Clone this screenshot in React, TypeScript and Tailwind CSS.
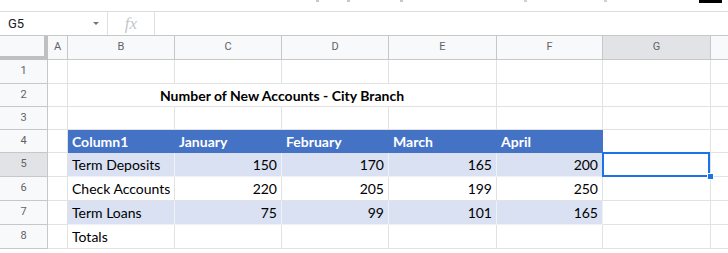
// ── IMPORTS ───────────────────────────────────────────────────────────────────
import React from "react";

// ── CONSTANTS ─────────────────────────────────────────────────────────────────
const COLS = [
  { key: "A", w: "w-[20px]" },
  { key: "B", w: "w-[107px]" },
  { key: "C", w: "w-[107px]" },
  { key: "D", w: "w-[107px]" },
  { key: "E", w: "w-[108px]" },
  { key: "F", w: "w-[106px]" },
  { key: "G", w: "w-[108px]" },
];

const ROW_H = ["h-[24px]", "h-[23px]", "h-[23px]", "h-[23px]", "h-[24px]", "h-[24px]", "h-[24px]", "h-[24px]"];

const DATA = [
  { label: "Term Deposits", vals: [150, 170, 165, 200], shade: true },
  { label: "Check Accounts", vals: [220, 205, 199, 250], shade: false },
  { label: "Term Loans", vals: [75, 99, 101, 165], shade: true },
];

const HEAD = ["Column1", "January", "February", "March", "April"];

const cellFont = { fontFamily: "Lato, 'Open Sans', sans-serif" };

// ── PIECES ────────────────────────────────────────────────────────────────────
function RowHead({ n, h, active }: { n: number; h: string; active?: boolean }) {
  return (
    <div
      className={`${h} w-[48px] shrink-0 flex items-center justify-center border-r border-b border-[#c7c7c7] text-[11px] text-[#5f6368] ${
        active ? "bg-[#e1e3e6]" : "bg-[#f8f9fa]"
      }`}
    >
      {n}
    </div>
  );
}

function Cell({
  w,
  h,
  children,
  className = "",
}: {
  w: string;
  h: string;
  children?: React.ReactNode;
  className?: string;
}) {
  return (
    <div
      className={`${w} ${h} shrink-0 flex items-center px-[4px] whitespace-nowrap border-r border-b ${className}`}
      style={cellFont}
    >
      {children}
    </div>
  );
}

function Tail({ h }: { h: string }) {
  return <div className={`${h} flex-1 border-b border-[#e2e2e2]`} />;
}

// ── COMPONENT ─────────────────────────────────────────────────────────────────
export default function App() {
  return (
    <div className="w-[728px] h-[253px] overflow-hidden bg-white" style={{ fontFamily: "Roboto, Arial, sans-serif" }}>
      {/* cut-off toolbar */}
      <div className="relative h-[12px] border-b border-[#dadce0]">
        <div className="absolute left-[699px] top-0 w-[23px] h-[3px] bg-black" />
        <div className="absolute left-[316px] top-0 w-[3px] h-[2px] bg-[#c8c8c8]" />
        <div className="absolute left-[347px] top-0 w-[3px] h-[2px] bg-[#c8c8c8]" />
        <div className="absolute left-[400px] top-0 w-[3px] h-[2px] bg-[#c8c8c8]" />
        <div className="absolute left-[524px] top-0 w-[3px] h-[2px] bg-[#d0d0d0]" />
        <div className="absolute left-[604px] top-0 w-[3px] h-[2px] bg-[#d0d0d0]" />
      </div>

      {/* formula bar */}
      <div className="h-[24px] flex items-center border-b border-[#c7c7c7]">
        <div className="w-[108px] h-full flex items-center justify-between pl-[8px] pr-[8px] border-r border-[#e0e0e0]">
          <span className="text-[13px] text-[#202124]">G5</span>
          <span className="w-0 h-0 border-l-[3px] border-r-[3px] border-t-[3px] border-l-transparent border-r-transparent border-t-[#70757a]" />
        </div>
        <div className="w-[47px] h-full flex items-center justify-center border-r border-[#e0e0e0]">
          <span className="text-[17px] italic text-[#c4c6c9]" style={{ fontFamily: "'Liberation Serif', serif" }}>
            fx
          </span>
        </div>
        <div className="flex-1" />
      </div>

      {/* column headers */}
      <div className="flex h-[24px]">
        <div className="w-[48px] h-full shrink-0 bg-[#f8f9fa] border-r-4 border-b-4 border-[#c0c0c0]" />
        {COLS.map((c) => (
          <div
            key={c.key}
            className={`${c.w} h-full shrink-0 flex items-center justify-center border-r border-b border-[#c7c7c7] text-[11px] text-[#5f6368] ${
              c.key === "G" ? "bg-[#e1e3e6]" : "bg-[#f8f9fa]"
            }`}
          >
            {c.key}
          </div>
        ))}
        <div className="flex-1 h-full bg-[#f8f9fa] border-b border-[#c7c7c7]" />
      </div>

      {/* row 1 */}
      <div className="flex">
        <RowHead n={1} h={ROW_H[0]} />
        {COLS.map((c) => (
          <Cell key={c.key} w={c.w} h={ROW_H[0]} className="border-[#e2e2e2]" />
        ))}
        <Tail h={ROW_H[0]} />
      </div>

      {/* row 2 – title */}
      <div className="flex">
        <RowHead n={2} h={ROW_H[1]} />
        <Cell w="w-[20px]" h={ROW_H[1]} className="border-[#e2e2e2]" />
        <Cell w="w-[429px]" h={ROW_H[1]} className="border-[#e2e2e2] justify-center">
          <span className="text-[14px] font-bold text-black">Number of New Accounts - City Branch</span>
        </Cell>
        <Cell w="w-[106px]" h={ROW_H[1]} className="border-[#e2e2e2]" />
        <Cell w="w-[108px]" h={ROW_H[1]} className="border-[#e2e2e2]" />
        <Tail h={ROW_H[1]} />
      </div>

      {/* row 3 */}
      <div className="flex">
        <RowHead n={3} h={ROW_H[2]} />
        {COLS.map((c) => (
          <Cell key={c.key} w={c.w} h={ROW_H[2]} className="border-[#e2e2e2]" />
        ))}
        <Tail h={ROW_H[2]} />
      </div>

      {/* row 4 – table header */}
      <div className="flex">
        <RowHead n={4} h={ROW_H[3]} />
        <Cell w="w-[20px]" h={ROW_H[3]} className="border-[#e2e2e2]" />
        {HEAD.map((t, i) => (
          <Cell key={t} w={COLS[i + 1].w} h={ROW_H[3]} className="bg-[#4472c4] border-[#4472c4]">
            <span className="text-[14px] font-bold text-white">{t}</span>
          </Cell>
        ))}
        <Cell w="w-[108px]" h={ROW_H[3]} className="border-[#e2e2e2]" />
        <Tail h={ROW_H[3]} />
      </div>

      {/* rows 5-7 – data */}
      {DATA.map((r, ri) => {
        const h = ROW_H[4 + ri];
        const bg = r.shade ? "bg-[#d9e1f2] border-[#eef1f8]" : "bg-white border-[#e2e2e2]";
        return (
          <div key={r.label} className="flex">
            <RowHead n={5 + ri} h={h} active={ri === 0} />
            <Cell w="w-[20px]" h={h} className="border-[#e2e2e2]" />
            <Cell w="w-[107px]" h={h} className={bg}>
              <span className="text-[14px] text-black">{r.label}</span>
            </Cell>
            {r.vals.map((v, vi) => (
              <Cell key={vi} w={COLS[vi + 2].w} h={h} className={`${bg} justify-end`}>
                <span className="text-[14px] text-black">{v}</span>
              </Cell>
            ))}
            {ri === 0 ? (
              <div className={`relative w-[108px] ${h} shrink-0 border-r border-b border-[#e2e2e2]`}>
                <div className="absolute -left-px -top-px w-[108px] h-[25px] border-2 border-[#1a73e8]" />
                <div className="absolute -right-[4px] -bottom-[4px] w-[7px] h-[7px] bg-[#1a73e8] border border-white" />
              </div>
            ) : (
              <Cell w="w-[108px]" h={h} className="border-[#e2e2e2]" />
            )}
            <Tail h={h} />
          </div>
        );
      })}

      {/* row 8 */}
      <div className="flex">
        <RowHead n={8} h={ROW_H[7]} />
        <Cell w="w-[20px]" h={ROW_H[7]} className="border-[#e2e2e2]" />
        <Cell w="w-[107px]" h={ROW_H[7]} className="border-[#e2e2e2]">
          <span className="text-[14px] text-black">Totals</span>
        </Cell>
        {COLS.slice(2).map((c) => (
          <Cell key={c.key} w={c.w} h={ROW_H[7]} className="border-[#e2e2e2]" />
        ))}
        <Tail h={ROW_H[7]} />
      </div>
    </div>
  );
}
